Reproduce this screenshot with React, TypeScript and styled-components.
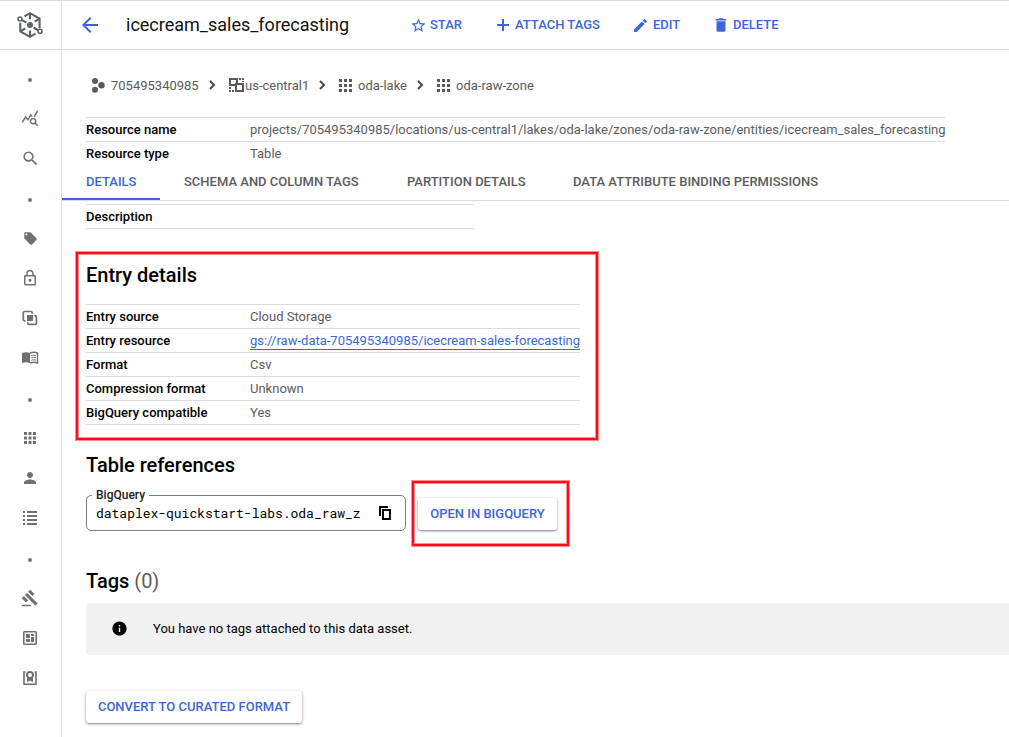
import React from 'react';
import styled, { createGlobalStyle, css } from 'styled-components';
import {
  MdQueryStats, MdSearch, MdOutlineLock, MdApps, MdPerson,
  MdGavel, MdArrowBack, MdStarOutline, MdEdit, MdDelete, MdInfo,
  MdLocalOffer,
} from 'react-icons/md';

const Global = createGlobalStyle`
  * { box-sizing: border-box; }
  body { margin: 0; background: #fff; font-family: Roboto, "Liberation Sans", sans-serif; font-size: 13px; color: #000; overflow: hidden; }
`;

const BLUE = '#3c67d3';
const LINE = '#dcdcdf';

const Page = styled.div`
  display: grid;
  grid-template-columns: 62px minmax(0, 1fr);
  width: 100%;
  height: 737px;
  overflow: hidden;
  border-top: 1px solid ${LINE};
`;

const Sidebar = styled.nav`
  display: flex;
  flex-direction: column;
  border-right: 1px solid ${LINE};
  color: #707070;
`;

const LogoCell = styled.div`
  height: 49px;
  display: flex;
  align-items: center;
  justify-content: center;
  border-bottom: 1px solid ${LINE};
  padding-right: 1px;
  margin-bottom: 8px;
`;

const NavItem = styled.div`
  height: 40px;
  display: flex;
  align-items: center;
  justify-content: center;
  padding-right: 1px;
`;

const NavDot = styled.span`
  width: 4px;
  height: 4px;
  border-radius: 50%;
  background: #757575;
  margin-top: 4px;
`;

const Main = styled.main`
  display: flex;
  flex-direction: column;
  min-width: 0;
`;

const Header = styled.header`
  height: 49px;
  flex: none;
  display: flex;
  align-items: center;
  border-bottom: 1px solid ${LINE};
  padding-left: 16px;
  color: ${BLUE};
`;

const BackIcon = styled(MdArrowBack)`
  flex: none;
`;

const Title = styled.h1`
  margin: 0 0 0 24px;
  width: 284px;
  font-size: 18px;
  font-weight: 400;
  line-height: 24px;
  color: #111;
  white-space: nowrap;
`;

const Action = styled.button<{ $w: number; $gap?: number }>`
  display: flex;
  align-items: center;
  gap: ${p => p.$gap ?? 4}px;
  width: ${p => p.$w}px;
  padding: 0;
  border: 0;
  background: none;
  color: ${BLUE};
  font: 500 13px/16px Roboto, sans-serif;
  white-space: nowrap;
`;

const Crumbs = styled.div`
  display: flex;
  align-items: center;
  height: 20px;
  margin: 25px 0 22px 29px;
  color: #5a5a5a;
  white-space: nowrap;
`;

const Crumb = styled.span<{ $w: number; $gap: number; $indent?: number }>`
  display: flex;
  align-items: center;
  gap: ${p => p.$gap}px;
  width: ${p => p.$w}px;
  padding-left: ${p => p.$indent ?? 0}px;
`;

const Separator = styled.svg`
  width: 7px;
  height: 10px;
  flex: none;
`;

const Table = styled.dl<{ $w: number }>`
  width: ${p => p.$w}px;
  margin: 0 0 0 24px;
  border-top: 1px solid ${LINE};
`;

const Row = styled.div<{ $open?: boolean }>`
  display: grid;
  grid-template-columns: 164px 1fr;
  height: 24px;
  line-height: 23px;
  ${p => !p.$open && css`border-bottom: 1px solid ${LINE};`}
`;

const Label = styled.dt`
  font-weight: 500;
  white-space: nowrap;
`;

const Value = styled.dd`
  margin: 0;
  color: #5c5c5c;
  white-space: nowrap;
`;

const Link = styled.a`
  display: inline-block;
  line-height: 16px;
  height: 17px;
  color: ${BLUE};
  border-bottom: 1px solid ${BLUE};
`;

const Tabs = styled.div`
  display: flex;
  height: 35px;
  flex: none;
  border-bottom: 1px solid ${LINE};
`;

const Tab = styled.div<{ $active?: boolean; $w: number }>`
  width: ${p => p.$w}px;
  height: 34px;
  padding-left: 24px;
  line-height: 32px;
  font-weight: 500;
  white-space: nowrap;
  color: ${p => (p.$active ? BLUE : '#5c5c5c')};
  ${p => p.$active && css`border-bottom: 2px solid ${BLUE};`}
`;

const Highlight = styled.section`
  border: 2px solid #ff0a22;
  box-shadow: 0 0 0 1px #ff9088, inset 0 0 0 1px #ff9088;
`;

const EntryBox = styled(Highlight)`
  width: 522px;
  height: 188px;
  margin: 23px 0 0 14px;
  & > dl { margin-left: 8px; }
`;

const Heading = styled.h2`
  margin: 0;
  font-size: 20px;
  font-weight: 500;
  line-height: 24px;
  span { color: #5c5c5c; font-weight: 400; }
`;

const EntryHeading = styled(Heading)`
  margin: 9px 0 17px 8px;
`;

const ReferencesHeading = styled(Heading)`
  margin-top: 13px;
`;

const Body = styled.div`
  display: flex;
  flex-direction: column;
  padding: 3px 0 0;
  & > h2 { margin-left: 24px; }
`;

const References = styled.div`
  display: flex;
  align-items: center;
  height: 65px;
  margin: 4px 0 23px 24px;
`;

const Field = styled.fieldset`
  display: flex;
  align-items: center;
  width: 320px;
  height: 42px;
  margin: -7px 0 0;
  padding: 0 12px 5px 9px;
  border: 1px solid #7b7f87;
  border-radius: 5px;
  min-width: 0;
`;

const Legend = styled.legend`
  margin-left: -4px;
  padding: 0 4px;
  font-size: 12px;
  font-weight: 500;
  line-height: 12px;
  color: #222;
`;

const FieldValue = styled.span`
  width: 267px;
  margin-right: 17px;
  white-space: nowrap;
  font: 13px/18px "Roboto Mono", "DejaVu Sans Mono", monospace;
  letter-spacing: -0.02px;
`;

const OpenBox = styled(Highlight)`
  width: 157px;
  height: 65px;
  margin-left: 6px;
  padding: 15px 0 0 4px;
`;

const Button = styled.button<{ $w: number }>`
  display: block;
  width: ${p => p.$w}px;
  height: 32px;
  padding: 0;
  border: 0;
  border-radius: 3px;
  background: #fff;
  color: ${BLUE};
  font: 500 13px/32px Roboto, sans-serif;
  white-space: nowrap;
  box-shadow: 0 1px 2px rgba(0, 0, 0, 0.38), 0 1px 4px rgba(0, 0, 0, 0.16);
`;

const Banner = styled.div`
  display: flex;
  align-items: center;
  gap: 25px;
  height: 52px;
  margin: 10px 0 36px 24px;
  padding: 0 0 1px 25px;
  border-radius: 4px 0 0 4px;
  background: #f1f1f1;
`;

const ConvertRow = styled.div`
  padding-left: 24px;
`;

const Logo = () => (
  <svg width="28" height="28" viewBox="0 0 28 28" fill="none" stroke="#5f6368" strokeWidth="2.1">
    <path d="M8.5 5.300 14 2.200l9.600 5.500v9.500M19.500 22.700 14 25.800 4.300 20.300v-8.500" />
    <path d="M14 2.200v6M14 19.500v6M23.600 7.700l-4.800 2.800M9.200 17.500l-4.900 2.800M5.500 8.900l5 2.800M17.500 16.500l5 2.900" />
    <circle cx="4" cy="8" r="2" fill="#fff" strokeWidth="1.6" />
    <circle cx="24" cy="20.300" r="2" fill="#fff" strokeWidth="1.6" />
    <circle cx="14" cy="14" r="3" fill="#5f6368" stroke="none" />
  </svg>
);

const Plus = () => (
  <svg width="18" height="18" viewBox="0 0 18 18" fill="currentColor">
    <path d="M8 3h2v5h5v2h-5v5H8v-5H3V8h5z" />
  </svg>
);

const Copy = () => (
  <svg width="15" height="16" viewBox="0 0 15 16" fill="none" stroke="#000" strokeWidth="2">
    <path d="M2 11V2h8" />
    <path d="M5 5h7v9H5z" />
  </svg>
);

const Reader = () => (
  <svg width="18" height="14" viewBox="0 0 18 14" fill="currentColor">
    <path d="M1 2q4-1.500 8 0v10q-4-1.500-8 0z" />
    <path d="M9 2q4-1.500 7.500 0v10q-3.500-1.500-7.500 0" fill="none" stroke="currentColor" strokeWidth="1.400" />
    <path d="M10.300 4.500q2-.7 4.700 0M10.300 6.800q2-.7 4.700 0M10.300 9.100q2-.7 4.700 0" fill="none" stroke="currentColor" />
  </svg>
);

const Overlap = () => (
  <svg width="16" height="16" viewBox="0 0 16 16" fill="none" stroke="currentColor" strokeWidth="1.7">
    <path d="M3.500 10.800h-.9a1.300 1.300 0 0 1-1.300-1.300V3.100a1.600 1.600 0 0 1 1.600-1.600h5.900a1.400 1.400 0 0 1 1.400 1.400v.8" />
    <path d="M12.200 5.600h.8a1.400 1.400 0 0 1 1.400 1.400v6a1.400 1.400 0 0 1-1.400 1.400H7a1.400 1.400 0 0 1-1.400-1.400v-.8" />
    <path d="M5 5h6v6H5z" fill="currentColor" stroke="none" />
  </svg>
);

const Lines = () => (
  <svg width="16" height="16" viewBox="0 0 16 16" fill="currentColor">
    {[1, 5, 9, 13].map(y => (
      <path key={y} d={`M1 ${y}h2v2H1zM5 ${y}h10v2H5z`} />
    ))}
  </svg>
);

const Board = () => (
  <svg width="16" height="16" viewBox="0 0 16 16" fill="currentColor">
    <path fillRule="evenodd" d="M2.500 1h11A1.500 1.500 0 0 1 15 2.500v11a1.500 1.500 0 0 1-1.500 1.500h-11A1.500 1.500 0 0 1 1 13.500v-11A1.500 1.500 0 0 1 2.500 1zM2.600 2.600v10.800h10.800V2.600z" />
    <path d="M4 4h4v4H4zM9 4h3v2H9zM4 9h4v3H4zM9 7h3v5H9z" />
  </svg>
);

const Badge = () => (
  <svg width="16" height="16" viewBox="0 0 16 16" fill="none" stroke="currentColor" strokeWidth="1.6">
    <path d="M3.500 2H2v12.200h12V2h-1.500" />
    <path d="M5 7h6v5.200L8 10.500l-3 1.700z" fill="currentColor" stroke="none" />
    <circle cx="8" cy="5" r="3" strokeWidth="2" fill="#fff" />
  </svg>
);

const Hive = () => (
  <svg width="14" height="15" viewBox="0 0 14 15" fill="currentColor">
    <circle cx="4" cy="3" r="3" /><circle cx="4" cy="11.700" r="3" /><circle cx="10.500" cy="7.300" r="3.200" />
  </svg>
);

const Region = () => (
  <svg width="15" height="14" viewBox="0 0 15 14" fill="currentColor">
    <path fillRule="evenodd" d="M0 0h9v5h6v9H6V8H0zM2 2v4h4V5h1V2zM8 7v1H8v4h5V7z" />
    <path d="M10 0h2v2h-2zM13 0h2v2h-2zM13 3h2v1h-2zM0 9h2v2H0zM0 12h2v2H0zM3 12h2v2H3z" />
  </svg>
);

const Grid = () => (
  <svg width="13" height="13" viewBox="0 0 13 13" fill="currentColor">
    {[0, 5, 10].map(y => (
      <path key={y} d={`M0 ${y}h3v3H0zM5 ${y}h3v3H5zM10 ${y}h3v3h-3z`} />
    ))}
  </svg>
);

const Chevron = () => (
  <Separator viewBox="0 0 7 10" fill="none" stroke="#4a4a4a" strokeWidth="2">
    <path d="M1 1l4 4-4 4" />
  </Separator>
);

const nav: (React.ReactNode | null)[] = [
  null,
  <MdQueryStats size={18} />,
  <MdSearch size={19} />,
  null,
  <MdLocalOffer size={15} />,
  <MdOutlineLock size={18} />,
  <Overlap />,
  <Reader />,
  null,
  <MdApps size={18} />,
  <MdPerson size={18} />,
  <Lines />,
  null,
  <MdGavel size={18} />,
  <Board />,
  <Badge />,
];

const entries: [string, React.ReactNode][] = [
  ['Entry source', 'Cloud Storage'],
  ['Entry resource', <Link>gs://raw-data-705495340985/icecream-sales-forecasting</Link>],
  ['Format', 'Csv'],
  ['Compression format', 'Unknown'],
  ['BigQuery compatible', 'Yes'],
];

export default function App() {
  return (
    <>
      <Global />
      <Page>
        <Sidebar>
          <LogoCell><Logo /></LogoCell>
          {nav.map((icon, i) => <NavItem key={i}>{icon ?? <NavDot />}</NavItem>)}
        </Sidebar>
        <Main>
          <Header>
            <BackIcon size={24} />
            <Title>icecream_sales_forecasting</Title>
            <Action $w={84} $gap={3}><MdStarOutline size={17} />STAR</Action>
            <Action $w={138} $gap={3}><Plus />ATTACH TAGS</Action>
            <Action $w={80}><MdEdit size={17} />EDIT</Action>
            <Action $w={80} $gap={3}><MdDelete size={18} />DELETE</Action>
          </Header>
          <Crumbs>
            <Crumb $w={118} $gap={6}><Hive />705495340985</Crumb>
            <Chevron />
            <Crumb $w={103} $gap={1} $indent={13}><Region />us-central1</Crumb>
            <Chevron />
            <Crumb $w={91} $gap={6} $indent={13}><Grid />oda-lake</Crumb>
            <Chevron />
            <Crumb $w={120} $gap={6} $indent={13}><Grid />oda-raw-zone</Crumb>
          </Crumbs>
          <Table $w={859}>
            <Row>
              <Label>Resource name</Label>
              <Value>projects/705495340985/locations/us-central1/lakes/oda-lake/zones/oda-raw-zone/entities/icecream_sales_forecasting</Value>
            </Row>
            <Row $open><Label>Resource type</Label><Value>Table</Value></Row>
          </Table>
          <Tabs>
            <Tab $active $w={98}>DETAILS</Tab>
            <Tab $w={223}>SCHEMA AND COLUMN TAGS</Tab>
            <Tab $w={166}>PARTITION DETAILS</Tab>
            <Tab $w={300}>DATA ATTRIBUTE BINDING PERMISSIONS</Tab>
          </Tabs>
          <Body>
            <Table $w={388}><Row><Label>Description</Label></Row></Table>
            <EntryBox>
              <EntryHeading>Entry details</EntryHeading>
              <Table $w={494}>
                {entries.map(([k, v]) => <Row key={k}><Label>{k}</Label><Value>{v}</Value></Row>)}
              </Table>
            </EntryBox>
            <ReferencesHeading>Table references</ReferencesHeading>
            <References>
              <Field>
                <Legend>BigQuery</Legend>
                <FieldValue>dataplex-quickstart-labs.oda_raw_z</FieldValue>
                <Copy />
              </Field>
              <OpenBox><Button $w={139}>OPEN IN BIGQUERY</Button></OpenBox>
            </References>
            <Heading>Tags <span>(0)</span></Heading>
            <Banner><MdInfo size={17} />You have no tags attached to this data asset.</Banner>
            <ConvertRow><Button $w={216}>CONVERT TO CURATED FORMAT</Button></ConvertRow>
          </Body>
        </Main>
      </Page>
    </>
  );
}
